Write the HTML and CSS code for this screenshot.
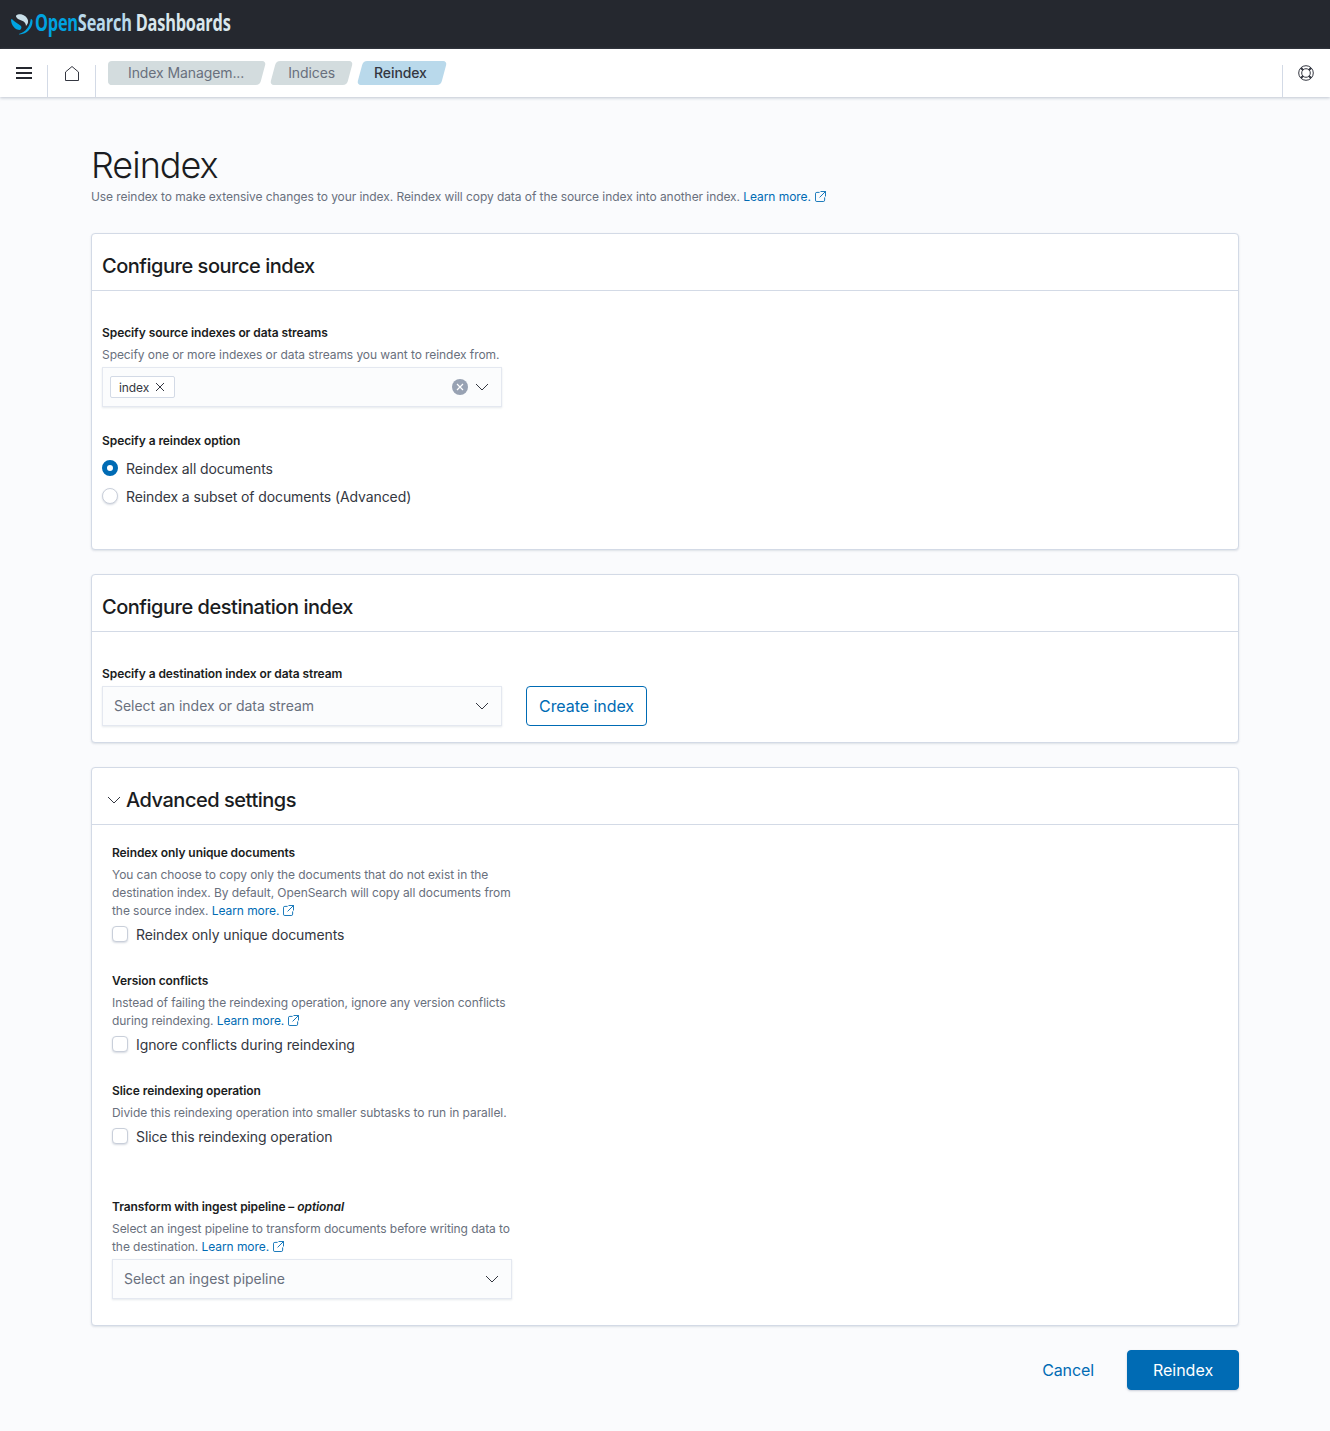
FILE: index.html
```html
<!DOCTYPE html>
<html lang="en">
<head>
    <meta charset="UTF-8">
    <meta name="viewport" content="width=device-width, initial-scale=1.0">
    <title>Reindex</title>
    <link rel="stylesheet" href="styles.css">
</head>
<body>

<header class="topbar">
    <svg class="logo-mark" width="23" height="23" viewBox="10 12 23 23">
        <path d="M18 13.500C22 12.500 27 15 28 19.500 28.500 22 27 24 26 25 26 22 24 20.500 21.500 19.500 19 18.500 16.500 17.500 16 15.500 15.800 14.600 16.800 13.800 18 13.500z" fill="#c9dfe9"/>
        <path d="M11 18.500C12.500 17.500 13 19 14 20 16 22 19 23 21 25 21.800 26 21.500 28 20 29 15 29 11 24 11 18.500z" fill="#00a3e0"/>
        <path d="M31 18C32 18 32.500 19 32.500 20.500 32.500 27 27 33 19.500 33.500 18.500 33.500 18.500 33 19.500 32.800 25 31.500 29.500 26 30.500 19.500 30.600 18.600 30.700 18 31 18z" fill="#00a3e0"/>
    </svg>
    <span class="logo-text"><span class="logo-open">Open</span><span class="logo-search">Search</span> Dashboards</span>
</header>

<nav class="navbar">
    <div class="nav-cell nav-menu">
        <svg width="16" height="12" viewBox="0 0 16 12"><path d="M0 1h16M0 6h16M0 11h16" stroke="#25282f" stroke-width="2" fill="none"/></svg>
    </div>
    <div class="nav-cell nav-home">
        <svg width="14" height="15" viewBox="0 0 14 15"><path d="M.5 14.500V6L7 .5 13.500 6v8.500z" stroke="#343741" fill="none"/></svg>
    </div>
    <div class="crumbs">
        <span class="crumb crumb-first">Index Managem...</span>
        <span class="crumb">Indices</span>
        <span class="crumb crumb-last">Reindex</span>
    </div>
    <div class="nav-cell nav-help">
        <svg width="16" height="16" viewBox="0 0 16 16" fill="none" stroke="#343741">
            <circle cx="8" cy="8" r="7.300"/>
            <circle cx="8" cy="8" r="4.300"/>
            <path d="M3 3l2 2M13 3l-2 2M3 13l2-2M13 13l-2-2" stroke-width="2"/>
        </svg>
    </div>
</nav>

<main class="page">
    <h1>Reindex</h1>
    <p class="help page-help">Use reindex to make extensive changes to your index. Reindex will copy data of the source index into another index. <a class="link">Learn more.<svg class="ext" width="11" height="11" viewBox="0 0 12 12" fill="none" stroke="#006bb4"><path d="M5 1.500H2A1.500 1.500 0 0 0 .5 3v7A1.500 1.500 0 0 0 2 11.500h7a1.500 1.500 0 0 0 1.500-1.500V7M6 .5h5.500V6M11.500.5L5 7"/></svg></a></p>

    <section class="panel panel-source">
        <h2 class="panel-title">Configure source index</h2>
        <div class="panel-body">
            <div class="field-label">Specify source indexes or data streams</div>
            <p class="help field-help">Specify one or more indexes or data streams you want to reindex from.</p>
            <div class="select combo">
                <span class="pill">index
                    <svg width="10" height="10" viewBox="0 0 10 10"><path d="M1 1l8 8M9 1l-8 8" stroke="#343741" fill="none"/></svg>
                </span>
                <span class="clear"><svg width="8" height="8" viewBox="0 0 8 8"><path d="M1 1l6 6M7 1L1 7" stroke="#fff" stroke-width="1.200" fill="none"/></svg></span>
                <svg class="chevron" width="14" height="8" viewBox="0 0 14 8"><path d="M1 1l6 6 6-6" stroke="#343741" fill="none"/></svg>
            </div>
            <div class="field-label option-label">Specify a reindex option</div>
            <div class="radio-row"><span class="radio radio-on"></span>Reindex all documents</div>
            <div class="radio-row"><span class="radio"></span>Reindex a subset of documents (Advanced)</div>
        </div>
    </section>

    <section class="panel panel-dest">
        <h2 class="panel-title">Configure destination index</h2>
        <div class="panel-body">
            <div class="field-label">Specify a destination index or data stream</div>
            <div class="dest-row">
                <div class="select placeholder">Select an index or data stream
                    <svg class="chevron" width="14" height="8" viewBox="0 0 14 8"><path d="M1 1l6 6 6-6" stroke="#343741" fill="none"/></svg>
                </div>
                <button class="btn-outline">Create index</button>
            </div>
        </div>
    </section>

    <section class="panel panel-advanced">
        <h2 class="panel-title adv-title">
            <svg width="14" height="8" viewBox="0 0 14 8"><path d="M1 1l6 6 6-6" stroke="#343741" fill="none"/></svg>
            Advanced settings
        </h2>
        <div class="adv-body">
            <div class="adv-group">
                <div class="field-label">Reindex only unique documents</div>
                <p class="help">You can choose to copy only the documents that do not exist in the destination index. By default, OpenSearch will copy all documents from the source index. <a class="link">Learn more.<svg class="ext" width="11" height="11" viewBox="0 0 12 12" fill="none" stroke="#006bb4"><path d="M5 1.500H2A1.500 1.500 0 0 0 .5 3v7A1.500 1.500 0 0 0 2 11.500h7a1.500 1.500 0 0 0 1.500-1.500V7M6 .5h5.500V6M11.500.5L5 7"/></svg></a></p>
                <div class="check-row"><span class="check"></span>Reindex only unique documents</div>
            </div>
            <div class="adv-group">
                <div class="field-label">Version conflicts</div>
                <p class="help">Instead of failing the reindexing operation, ignore any version conflicts during reindexing. <a class="link">Learn more.<svg class="ext" width="11" height="11" viewBox="0 0 12 12" fill="none" stroke="#006bb4"><path d="M5 1.500H2A1.500 1.500 0 0 0 .5 3v7A1.500 1.500 0 0 0 2 11.500h7a1.500 1.500 0 0 0 1.500-1.500V7M6 .5h5.500V6M11.500.5L5 7"/></svg></a></p>
                <div class="check-row"><span class="check"></span>Ignore conflicts during reindexing</div>
            </div>
            <div class="adv-group">
                <div class="field-label">Slice reindexing operation</div>
                <p class="help">Divide this reindexing operation into smaller subtasks to run in parallel.</p>
                <div class="check-row"><span class="check"></span>Slice this reindexing operation</div>
            </div>
            <div class="adv-group adv-pipeline">
                <div class="field-label">Transform with ingest pipeline – <em>optional</em></div>
                <p class="help">Select an ingest pipeline to transform documents before writing data to the destination. <a class="link">Learn more.<svg class="ext" width="11" height="11" viewBox="0 0 12 12" fill="none" stroke="#006bb4"><path d="M5 1.500H2A1.500 1.500 0 0 0 .5 3v7A1.500 1.500 0 0 0 2 11.500h7a1.500 1.500 0 0 0 1.500-1.500V7M6 .5h5.500V6M11.500.5L5 7"/></svg></a></p>
                <div class="select placeholder pipeline-select">Select an ingest pipeline
                    <svg class="chevron" width="14" height="8" viewBox="0 0 14 8"><path d="M1 1l6 6 6-6" stroke="#343741" fill="none"/></svg>
                </div>
            </div>
        </div>
    </section>

    <div class="actions">
        <button class="btn-text">Cancel</button>
        <button class="btn-fill">Reindex</button>
    </div>
</main>

</body>
</html>
```

FILE: styles.css
```css
html, body { margin: 0; padding: 0; }
body { font-family: Inter, "Noto Sans", sans-serif; background-color: #fafbfd; color: #343741; font-size: 14px; letter-spacing: -0.1px; min-height: 1431px; }
h1, h2, p { margin: 0; }

.topbar { height: 49px; background-color: #25282f; display: flex; align-items: center; padding: 0 0 3px 10px; box-sizing: border-box; }
.logo-mark { flex: none; margin-top: 3px; }
.logo-text { display: inline-block; margin-left: 2px; font-family: "Open Sans", sans-serif; font-weight: 700; font-size: 24px; line-height: 30px; color: #d9e6ec; white-space: nowrap; transform: scaleX(0.68); transform-origin: left center; letter-spacing: -0.3px; margin-top: -2px; }
.logo-open { color: #00a3e0; }
.logo-search { color: #b9d9eb; }

.navbar { height: 48px; background-color: #fff; display: flex; align-items: stretch; box-shadow: 0 1px 3px rgba(152,162,179,0.6); position: relative; }
.nav-cell { display: flex; align-items: flex-start; justify-content: center; margin-top: 16px; }
.nav-menu { width: 47px; border-right: 1px solid #d3dae6; padding-top: 2px; box-sizing: content-box; }
.nav-home { width: 47px; border-right: 1px solid #d3dae6; padding-top: 1px; }
.crumbs { flex: 1; display: flex; align-items: center; gap: 4px; padding-left: 12px; }
.crumb { position: relative; z-index: 0; height: 24px; line-height: 24px; padding: 0 18px; color: #69707d; }
.crumb::before { content: ""; position: absolute; z-index: -1; left: 3px; right: 3px; top: 0; bottom: 0; background-color: #d3dcde; border-radius: 4px; transform: skewX(-15deg); }
.crumb-first { padding: 0 22px 0 20px; }
.crumb-first::after { content: ""; position: absolute; z-index: -1; left: 0; width: 24px; top: 0; bottom: 0; background-color: #d3dcde; border-radius: 4px; }
.crumb-last { color: #343741; font-weight: 500; padding: 0 20px 0 17px; }
.crumb-last::before { background-color: #b9d9eb; }
.nav-help { width: 46px; padding-right: 1px; border-left: 1px solid #d3dae6; }

.page { padding: 48px 91px 0; }
h1 { font-weight: 300; font-size: 36px; line-height: 40px; color: #1a1c21; letter-spacing: -1px; }
.help { font-size: 12px; line-height: 18px; color: #69707d; letter-spacing: -0.07px; }
.page-help { margin-top: 3px; }
.link { color: #006bb4; }
.ext { margin-left: 4px; vertical-align: -1px; }

.panel { background-color: #fff; border: 1px solid #d3dae6; border-radius: 4px; box-shadow: 0 1px 2px rgba(152,162,179,0.3); margin-top: 24px; }
.page-help + .panel { margin-top: 27px; }
.panel-title { font-size: 20px; font-weight: 500; line-height: 24px; color: #1a1c21; padding: 20px 10px 12px; border-bottom: 1px solid #d3dae6; letter-spacing: -0.47px; }
.panel-body { padding: 34px 10px 16px; }
.panel-source { height: 317px; box-sizing: border-box; }

.field-label { font-size: 12px; font-weight: 600; line-height: 16px; color: #1a1c21; letter-spacing: -0.08px; }
.field-label em { font-style: italic; }
.field-help { margin-top: 5px; line-height: 18px; }
.select { width: 400px; height: 40px; box-sizing: border-box; background-color: #fbfcfd; border: 1px solid #e4e8f0; box-shadow: 0 1px 2px rgba(152,162,179,0.25); display: flex; align-items: center; position: relative; }
.combo { margin-top: 3px; padding-left: 7px; }
.placeholder { color: #69707d; padding: 0 0 2px 11px; letter-spacing: -0.03px; }
.chevron { position: absolute; right: 12px; top: 15px; }
.pill { display: inline-flex; align-items: center; gap: 6px; height: 22px; box-sizing: border-box; padding: 0 9px 0 8px; border: 1px solid #d3dae6; border-radius: 2px; background-color: #fff; font-size: 12px; color: #343741; }
.clear { position: absolute; right: 33px; top: 11px; width: 16px; height: 16px; border-radius: 50%; background-color: #98a2b3; display: flex; align-items: center; justify-content: center; }

.option-label { margin-top: 26px; }
.radio-row { display: flex; align-items: center; gap: 8px; height: 28px; color: #343741; }
.option-label + .radio-row { margin-top: 5px; }
.radio { width: 16px; height: 16px; box-sizing: border-box; border-radius: 50%; background-color: #fff; border: 1px solid #c9cfda; box-shadow: 0 1px 2px rgba(152,162,179,0.4); }
.radio-on { background-color: #fff; border: 5px solid #006bb4; box-shadow: none; }

.dest-row { display: flex; gap: 24px; margin-top: 4px; }
.btn-outline { height: 40px; padding: 0 12px; font: 400 16px Inter, sans-serif; letter-spacing: -0.05px; color: #006bb4; background-color: #fff; border: 1px solid #006bb4; border-radius: 4px; }

.adv-title { display: flex; align-items: center; gap: 5px; padding-left: 15px; }
.adv-body { padding: 20px 20px 26px; }
.adv-group { margin-bottom: 27px; }
.adv-group .help { margin-top: 5px; width: 404px; }
.adv-pipeline { margin-top: 51px; margin-bottom: 0; }
.check-row { display: flex; align-items: center; gap: 8px; height: 24px; margin-top: 2px; color: #343741; }
.check { width: 16px; height: 16px; box-sizing: border-box; background-color: #fff; border: 1px solid #c9cfda; border-radius: 4px; box-shadow: 0 1px 2px rgba(152,162,179,0.4); }
.pipeline-select { margin-top: 3px; }

.actions { display: flex; justify-content: flex-end; align-items: center; gap: 20px; margin-top: 24px; }
.btn-text { height: 40px; padding: 0 13px; font: 400 16px Inter, sans-serif; letter-spacing: -0.1px; color: #006bb4; background: none; border: none; }
.btn-fill { width: 112px; height: 40px; font: 400 16px Inter, sans-serif; color: #fff; background-color: #006bb4; border: 1px solid #006bb4; border-radius: 4px; box-shadow: 0 1px 2px rgba(152,162,179,0.5); }
```
